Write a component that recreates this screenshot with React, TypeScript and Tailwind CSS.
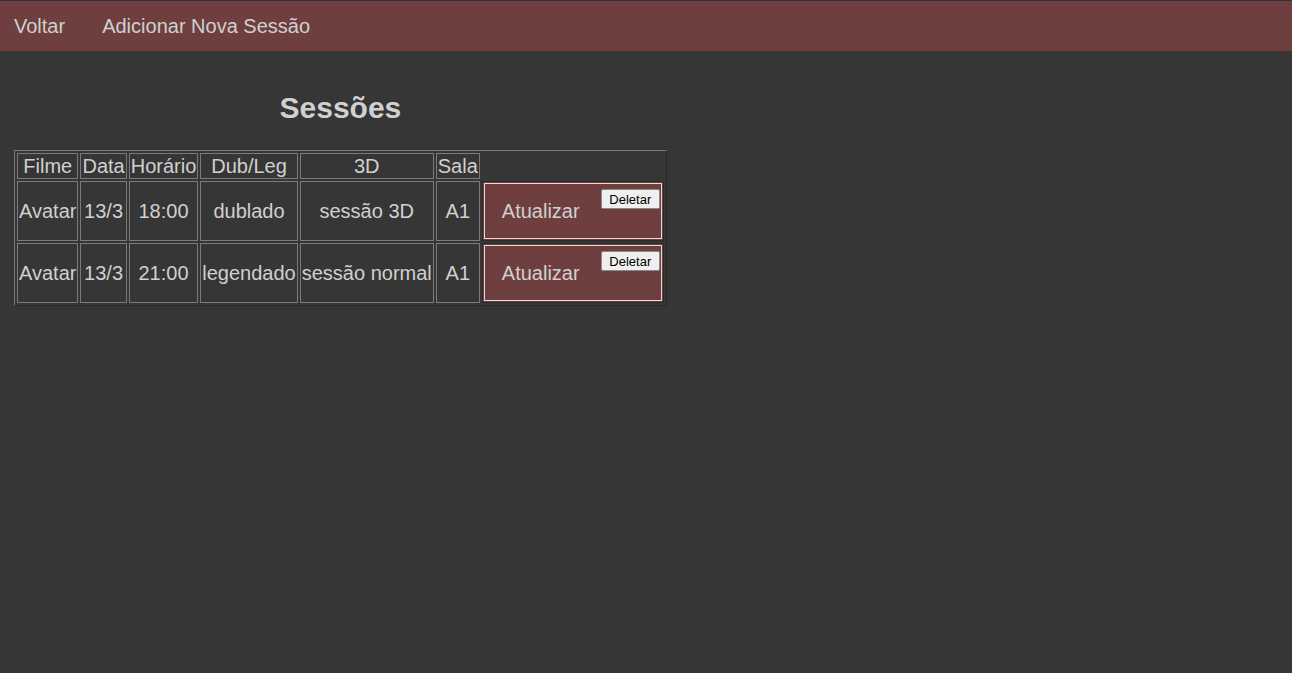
type Sessao = {
  id: number;
  filme: string;
  data: string;
  horario: string;
  dubLeg: string;
  tipo: string;
  sala: string;
};

const sessoes: Sessao[] = [
  { id: 1, filme: 'Avatar', data: '13/3', horario: '18:00', dubLeg: 'dublado', tipo: 'sessão 3D', sala: 'A1' },
  { id: 2, filme: 'Avatar', data: '13/3', horario: '21:00', dubLeg: 'legendado', tipo: 'sessão normal', sala: 'A1' },
];

const headers = ['Filme', 'Data', 'Horário', 'Dub/Leg', '3D', 'Sala'];

export default function App() {
  return (
    <div className="min-h-[673px] bg-[#363636] text-[20px] text-[#d0d0d0] font-['Liberation_Sans',Arial,sans-serif]">
      <nav className="flex h-[51px] items-center border-t border-[#2c3040] bg-[#6f3f3f]">
        <a className="ml-[14px] cursor-pointer">Voltar</a>
        <a className="ml-[37px] cursor-pointer">Adicionar Nova Sessão</a>
      </nav>

      <div className="p-[14px]">
        <div className="inline-block">
          <h2 className="mt-[26px] mb-[25px] text-center text-[30px] font-bold leading-[34px]">Sessões</h2>
          <table className="border-separate border-spacing-[2px] border border-t-[#7a7a7a] border-l-[#7a7a7a] border-r-[#2a2a2a] border-b-[#2a2a2a]">
            <thead>
              <tr>
                {headers.map((h) => (
                  <td key={h} className="border border-[#7a7a7a] p-[1px] text-center font-normal leading-[22px]">
                    {h}
                  </td>
                ))}
              </tr>
            </thead>
            <tbody>
              {sessoes.map((s) => (
                <tr key={s.id}>
                  <td className="border border-[#7a7a7a] p-[1px] text-center">{s.filme}</td>
                  <td className="border border-[#7a7a7a] p-[1px] text-center">{s.data}</td>
                  <td className="border border-[#7a7a7a] p-[1px] text-center">{s.horario}</td>
                  <td className="border border-[#7a7a7a] p-[1px] text-center">{s.dubLeg}</td>
                  <td className="border border-[#7a7a7a] p-[1px] text-center">{s.tipo}</td>
                  <td className="border border-[#7a7a7a] p-[1px] text-center">{s.sala}</td>
                  <td className="border border-[#2a2a2a] bg-[#6f3f3f] p-[1px]">
                    <div className="relative flex h-[56px] w-[178px] items-center border border-[#e8d8d8] pl-[17px]">
                      <span>Atualizar</span>
                      <button className="absolute right-[1px] top-[5px] h-[20px] w-[59px] rounded-[2px] border border-[#8a8a8a] bg-[#efefef] text-[13px] leading-[15px] text-black">
                        Deletar
                      </button>
                    </div>
                  </td>
                </tr>
              ))}
            </tbody>
          </table>
        </div>
      </div>
    </div>
  );
}
